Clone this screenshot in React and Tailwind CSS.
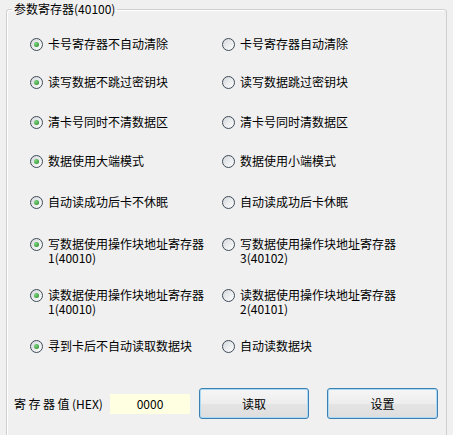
import React, { useState } from 'react';

// 参数寄存器选项：每行左右两个单选
const ROWS = [
  { key: 'clear', mt: 'mt-[21px]', left: '卡号寄存器不自动清除', right: '卡号寄存器自动清除' },
  { key: 'skip', mt: 'mt-[24px]', left: '读写数据不跳过密钥块', right: '读写数据跳过密钥块' },
  { key: 'area', mt: 'mt-[26px]', left: '清卡号同时不清数据区', right: '清卡号同时清数据区' },
  { key: 'endian', mt: 'mt-[25px]', left: '数据使用大端模式', right: '数据使用小端模式' },
  { key: 'sleep', mt: 'mt-[27px]', left: '自动读成功后卡不休眠', right: '自动读成功后卡休眠' },
  { key: 'write', mt: 'mt-[28px]', left: '写数据使用操作块地址寄存器1(40010)', right: '写数据使用操作块地址寄存器3(40102)' },
  { key: 'read', mt: 'mt-[23px]', left: '读数据使用操作块地址寄存器1(40010)', right: '读数据使用操作块地址寄存器2(40101)' },
  { key: 'auto', mt: 'mt-[23px]', left: '寻到卡后不自动读取数据块', right: '自动读数据块' },
];

function Radio({ checked, label, onClick }) {
  return (
    <label onClick={onClick} className="flex items-start gap-[5px] cursor-default">
      <span className="mt-[1px] w-[13px] h-[13px] shrink-0 rounded-full border border-[#3e4a56] bg-[linear-gradient(135deg,#d4d8dc,#ffffff)] flex items-center justify-center">
        {checked && (
          <span className="w-[5px] h-[5px] rounded-full bg-[radial-gradient(circle_at_35%_35%,#7fd47f,#1f8a1f)]" />
        )}
      </span>
      <span className="w-[170px] text-[12px] leading-[14px] text-black">{label}</span>
    </label>
  );
}

function WinButton({ children }) {
  return (
    <button className="h-[31px] rounded-[3px] border border-[#3c7fb1] bg-[linear-gradient(#f6f6f6,#ededed_50%,#e4e4e4_51%,#dedede)] shadow-[inset_0_0_0_1px_#a9dbf6] text-[12px] text-black">
      {children}
    </button>
  );
}

export default function App() {
  const [values, setValues] = useState(() => Object.fromEntries(ROWS.map((r) => [r.key, 'left'])));

  return (
    <div className="w-[453px] h-[435px] overflow-hidden bg-[#f0f0f0] font-['Noto_Sans_CJK_SC',sans-serif]">
      <fieldset className="ml-[6px] mt-[2px] w-[441px] h-[480px] border border-[#cfcfcf] rounded-[3px] shadow-[inset_1px_1px_0_#ffffff]">
        <legend className="ml-[5px] px-[2px] text-[12px] leading-[14px] text-black">参数寄存器(40100)</legend>

        {ROWS.map((row) => (
          <div key={row.key} className={`${row.mt} grid grid-cols-[192px_1fr] pl-[23px]`}>
            <Radio
              checked={values[row.key] === 'left'}
              label={row.left}
              onClick={() => setValues({ ...values, [row.key]: 'left' })}
            />
            <Radio
              checked={values[row.key] === 'right'}
              label={row.right}
              onClick={() => setValues({ ...values, [row.key]: 'right' })}
            />
          </div>
        ))}

        {/* 寄存器值 + 按钮 */}
        <div className="mt-[35px] pl-[7px] flex items-center">
          <span className="w-[84px] text-[12px] leading-[14px] text-black whitespace-nowrap">
            <span className="tracking-[2.5px]">寄存器值</span>(HEX)
          </span>
          <div className="ml-[12px] w-[80px] h-[20px] bg-[#ffffe1] flex items-center justify-center text-[12px] text-black">
            0000
          </div>
          <div className="ml-[9px] w-[110px] flex">
            <WinButton><span className="block w-[108px]">读取</span></WinButton>
          </div>
          <div className="ml-[18px] w-[111px] flex">
            <WinButton><span className="block w-[109px]">设置</span></WinButton>
          </div>
        </div>
      </fieldset>
    </div>
  );
}
